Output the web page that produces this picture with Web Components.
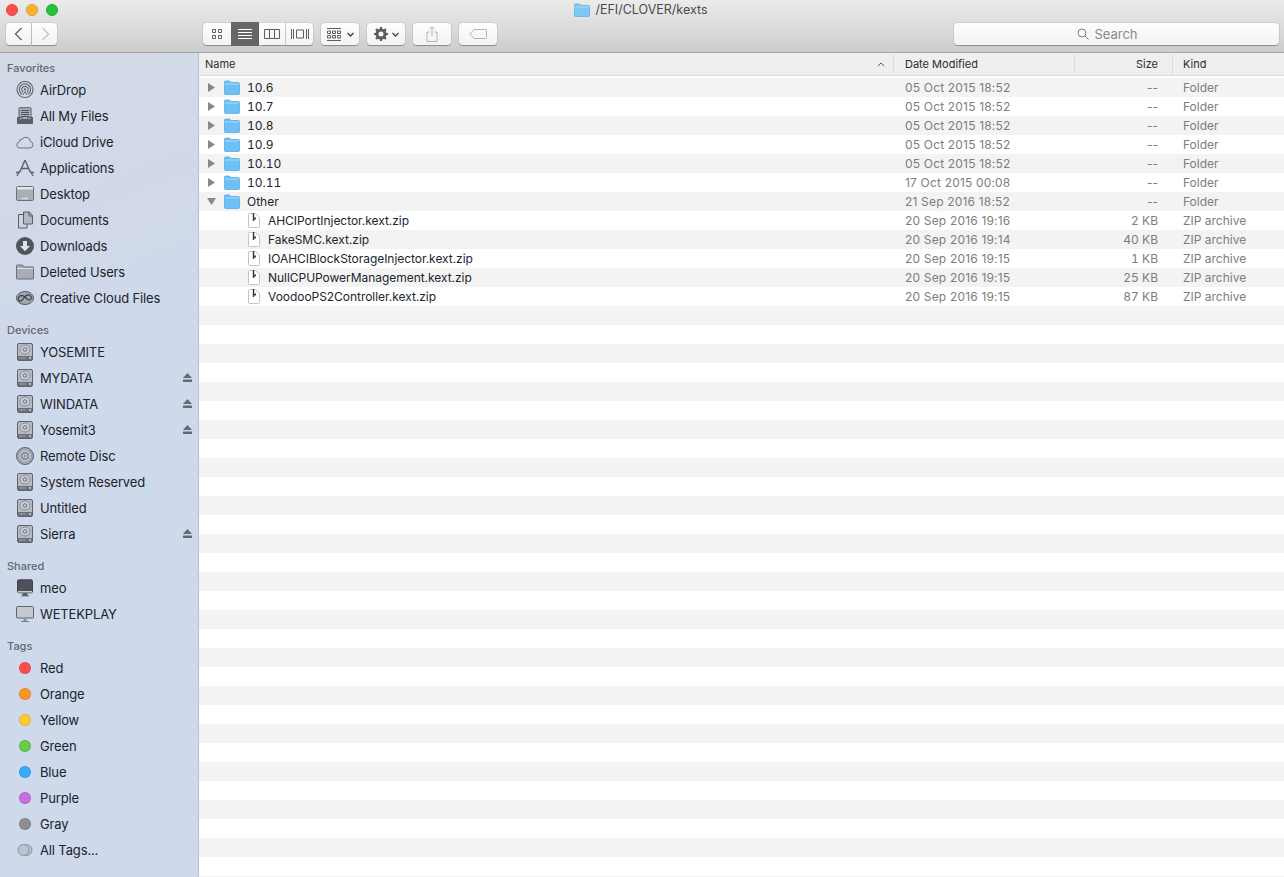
<!DOCTYPE html>
<html><head><meta charset="utf-8"><style>
html,body{margin:0;height:100%;overflow:hidden}
body{font-family:"Inter","Liberation Sans",sans-serif;width:1284px;height:877px}
</style></head><body>
<finder-window></finder-window>
<script>
const I={
airdrop:'<circle cx="9" cy="8.500" r="8" fill="none" stroke="#666a72" stroke-width="1.200"/><circle cx="9" cy="8.500" r="5.600" fill="none" stroke="#666a72" stroke-width="1.200"/><circle cx="9" cy="8.500" r="3.200" fill="none" stroke="#666a72" stroke-width="1.200"/><circle cx="9" cy="8.500" r="1.200" fill="#666a72"/><path d="M4.500 15l4.500-6 4.500 6z" fill="#cfd9ec"/><path d="M7 14l2-3.500 2 3.500" fill="none" stroke="#666a72"/>',
files:'<path d="M1 10.500h16v5.500a1 1 0 0 1-1 1H2a1 1 0 0 1-1-1z" fill="#5b5f66"/><rect x="3" y=".7" width="12" height="12" rx=".8" fill="#a9aeb8" stroke="#5b5f66"/><path d="M5 3.500h8M5 5.500h8M5 7.500h8M5 9.500h8" stroke="#4f535a"/><path d="M1 10.500h5l1 2h4l1-2h5" fill="none" stroke="#5b5f66"/>',
cloud:'<path d="M4.500 15h9.500a3.300 3.300 0 0 0 .5-6.500A4.700 4.700 0 0 0 6.200 6 3 3 0 0 0 3.300 9 3 3 0 0 0 4.500 15z" fill="none" stroke="#6c7078"/>',
apps:'<path d="M9 1L3.800 13M9 1l5.200 12M5.300 9.500h7.400M0 13.500h3.500M14.500 13.500H18" fill="none" stroke="#5b5f66" stroke-width="1.400"/><path d="M1 17l2.500-5M17 17l-2.500-5" stroke="#5b5f66" stroke-width="1.200"/>',
desktop:'<rect x=".5" y="1.500" width="17" height="14" rx="1.500" fill="#a9aeb8" stroke="#6b6f77"/><path d="M1 2h16v2.500H1z" fill="#e2e6ee"/><path d="M6 13.500h6" stroke="#fff" stroke-dasharray="1 .7" stroke-width="1.400"/>',
docs:'<path d="M8 3.500H2.500v13.500H11v-4" fill="#cdd3df" stroke="#5b5f66"/><path d="M7.500 1h6l3 3.500V13h-9z" fill="#b3b8c3" stroke="#5b5f66"/><path d="M13 1v4h3.500" fill="none" stroke="#5b5f66"/>',
down:'<circle cx="9" cy="9" r="9" fill="#50545b"/><path d="M7 4h4v5h3l-5 5.200L4 9h3z" fill="#dfe4ee"/>',
folder:'<path d="M.5 3a1 1 0 0 1 1-1h5l1.500 2h9a.5.5 0 0 1 .5.500V15.500a.5.5 0 0 1-.5.500H1a.5.5 0 0 1-.5-.5z" fill="#a7acb8" stroke="#6b6f77"/><path d="M1 5.500h16" stroke="#dfe3ec"/>',
cc:'<ellipse cx="9" cy="9" rx="8.500" ry="6.500" fill="#a2a6b0" stroke="#55595f"/><path d="M2.500 11c-1-3 2-5.500 5-4 3 2 4 5 7 3.500 2-1.500.5-5-3-4.500-3 .5-3.500 4-6.500 6-1 .3-2 0-2.500-1" fill="none" stroke="#3f4349" stroke-width="1.300"/>',
hd:'<rect x="1.500" y=".5" width="15" height="17" rx="1.500" fill="#b5bac4" stroke="#5f636a"/><rect x="2" y="13" width="14" height="4" fill="#6c7077"/><path d="M3.500 15h6" stroke="#c5c9d1" stroke-dasharray="1 .6"/><circle cx="14" cy="15" r=".9" fill="#dfe2e8"/><ellipse cx="9" cy="6.500" rx="5" ry="4.500" fill="#cbcfd8" stroke="#878b94"/><ellipse cx="9" cy="6.500" rx="2" ry="1.700" fill="none" stroke="#666a72"/>',
disc:'<circle cx="9" cy="9" r="8.500" fill="#a3a7b0" stroke="#5f636a"/><circle cx="9" cy="9" r="5" fill="none" stroke="#c6cad2"/><circle cx="9" cy="9" r="3" fill="#cfd3db" stroke="#6f737a"/><circle cx="9" cy="9" r="1.200" fill="#8a8e97"/>',
imac:'<rect x="1.500" y=".8" width="15" height="13" rx="1.500" fill="#4e5157" stroke="#3f4248"/><rect x="2" y="12" width="14" height="1.500" fill="#c9cdd5"/><path d="M7 14.500h4l.5 2h-5zM5 17h8" fill="#55595f" stroke="#55595f" stroke-width=".7"/>',
mon:'<rect x=".5" y="1.500" width="17" height="11.500" rx="1" fill="#c3c8d2" stroke="#5f636a"/><path d="M7.500 13.500h3V16h-3z" fill="#8c9098"/><path d="M5 16.500h8" stroke="#777b83"/>',
};
const tpl=(s)=>{const t=document.createElement('template');t.innerHTML=s;return t};
const mk=(name,html,cls)=>{const t=tpl(html);customElements.define(name,class extends HTMLElement{
 constructor(){super();this.attachShadow({mode:'open'}).appendChild(t.content.cloneNode(true))}
 connectedCallback(){if(cls&&!this._d){this._d=1;cls.call(this)}}
})};
const chev='<svg width="7" height="5" viewBox="0 0 7 5"><path d="M.5 1l3 3 3-3" fill="none" stroke="#444" stroke-width="1.300"/></svg>';

mk('traffic-lights',`<style>:host{display:flex;gap:8px}i{width:12px;height:12px;border-radius:50%;display:block;box-sizing:border-box}</style>
<i style="background:#fc4f4e;border:.5px solid #e2433f"></i><i style="background:#fdb22e;border:.5px solid #e09d25"></i><i style="background:#25c33a;border:.5px solid #1fa92f"></i>`);

mk('tool-btn',`<style>:host{display:flex;align-items:center;justify-content:center;flex:none;height:22px;box-sizing:border-box;background:linear-gradient(#fdfdfd,#f3f3f3);border-radius:4px;box-shadow:0 .5px 1px rgba(0,0,0,.32),0 0 0 .5px rgba(0,0,0,.07)}</style><slot></slot>`);

mk('title-bar',`<style>:host{display:block;box-sizing:border-box;height:53px;background:linear-gradient(#ebebeb,#cdcdcd);border-bottom:1px solid #a6a6a6}
.top{display:grid;grid-template-columns:1fr auto 1fr;height:19px;align-items:center;padding:0 6px}
.title{display:flex;align-items:center;gap:5px;font:12.5px "Inter",sans-serif;color:#4a4a4a;margin-left:-2px}
.bar{display:flex;align-items:flex-start;height:22px;margin-top:4px;padding-left:6px}
svg{display:block}
.nav{width:25px}
.v{width:28px}
.m{width:38px;margin-left:8px}
.search{margin-left:457px;width:325px;font-size:13px;color:#8a8a8a;gap:5px;padding-right:18px}
.sel{height:24px;margin-top:-1px;background:#666;border-radius:0;box-shadow:none}
</style>
<div class="top"><traffic-lights></traffic-lights><div class="title"><svg width="16" height="14" viewBox="0 0 16 14"><path d="M.5 2a1 1 0 0 1 1-1h4l1.500 1.500h7.500a1 1 0 0 1 1 1V12.500a1 1 0 0 1-1 1h-13a1 1 0 0 1-1-1z" fill="#7ec8f6" stroke="#5aa9de" stroke-width=".7"/><path d="M.8 4h14.400" stroke="#a8dcfa"/></svg><span>/EFI/CLOVER/kexts</span></div><div></div></div>
<div class="bar">
 <tool-btn class="nav" style="border-radius:4px 0 0 4px;margin-right:1px"><svg width="10" height="14" viewBox="0 0 10 14"><path d="M7.500 1L1.500 7l6 6" fill="none" stroke="#666" stroke-width="1.400"/></svg></tool-btn>
 <tool-btn class="nav" style="border-radius:0 4px 4px 0;margin-right:146px"><svg width="10" height="14" viewBox="0 0 10 14"><path d="M2.500 1l6 6-6 6" fill="none" stroke="#c4c4c4" stroke-width="1.400"/></svg></tool-btn>
 <tool-btn class="v" style="border-radius:4px 0 0 4px"><svg width="10" height="10" viewBox="0 0 10 10"><path d="M.5.500h3v3h-3zM6.500.500h3v3h-3zM.5 6.500h3v3h-3zM6.500 6.500h3v3h-3z" fill="none" stroke="#5e5e5e"/></svg></tool-btn>
 <tool-btn class="v sel"><svg width="14" height="10" viewBox="0 0 14 10"><path d="M0 .5h14M0 3.500h14M0 6.500h14M0 9.500h14" stroke="#fff"/></svg></tool-btn>
 <tool-btn style="width:27px;border-radius:0;border-right:1px solid #d8d8d8"><svg width="16" height="10" viewBox="0 0 16 10"><path d="M.5.500h15v9H.500zM5.500.500v9M10.500.500v9" fill="none" stroke="#5e5e5e"/></svg></tool-btn>
 <tool-btn style="width:27px;border-radius:0 4px 4px 0"><svg width="18" height="12" viewBox="0 0 18 12"><path d="M5.500 2h7v8h-7zM.5 1v10M2.500 1v10M15.500 1v10M17.500 1v10" fill="none" stroke="#5e5e5e"/></svg></tool-btn>
 <tool-btn class="m" style="gap:6px"><svg width="14" height="13" viewBox="0 0 14 13"><path d="M0 .5h14M0 12.500h14M.5 3h3v2.500h-3zM5.500 3h3v2.500h-3zM10.500 3h3v2.500h-3zM.5 7.500h3V10h-3zM5.500 7.500h3V10h-3zM10.500 7.500h3V10h-3z" fill="none" stroke="#5e5e5e"/></svg>${chev}</tool-btn>
 <tool-btn class="m" style="gap:4px"><svg width="14" height="14" viewBox="0 0 14 14"><circle cx="7" cy="7" r="4" fill="none" stroke="#5c5c5c" stroke-width="3"/><path d="M7 0v3M7 11v3M0 7h3M11 7h3M2 2l2 2M10 10l2 2M12 2l-2 2M4 10l-2 2" stroke="#5c5c5c" stroke-width="2.200"/></svg>${chev}</tool-btn>
 <tool-btn class="m"><svg width="12" height="16" viewBox="0 0 12 16"><path d="M3.500 6H1v9.500h10V6H8.500M6 10.500V1M3.500 3.200L6 .8l2.500 2.400" fill="none" stroke="#b2b2b2"/></svg></tool-btn>
 <tool-btn class="m"><svg width="18" height="10" viewBox="0 0 18 10"><path d="M5 .5h11.500a1 1 0 0 1 1 1v7a1 1 0 0 1-1 1H5L.8 5z" fill="none" stroke="#b2b2b2"/></svg></tool-btn>
 <tool-btn class="search"><svg width="12" height="12" viewBox="0 0 12 12"><circle cx="5" cy="5" r="4" fill="none" stroke="#808080"/><path d="M8 8l3.500 3.500" stroke="#808080"/></svg><span>Search</span></tool-btn>
</div>`);

mk('side-item',`<style>:host{display:flex;align-items:center;height:26px;padding-left:16px;font-size:13px;color:#20232b;position:relative;letter-spacing:-.14px}
.ic{width:18px;height:18px;margin-right:6px;flex:none;display:flex;align-items:center;justify-content:center}
.dot{width:12px;height:12px;border-radius:50%;box-sizing:border-box;border:.5px solid rgba(0,0,0,.1)}
svg{display:block}
.ej{position:absolute;right:6px;top:8px}
</style><span class="ic"></span><slot></slot>`,function(){
 const ic=this.shadowRoot.querySelector('.ic');
 const n=this.getAttribute('icon'),c=this.getAttribute('color');
 if(n==='alltags')ic.innerHTML='<svg width="16" height="14" viewBox="0 0 16 14"><circle cx="9.500" cy="7" r="5.500" fill="#bcc3d2" stroke="#8e939e"/><circle cx="6.500" cy="7" r="5.500" fill="#bcc3d2" stroke="#8e939e"/></svg>';
 else if(c)ic.innerHTML=`<span class="dot" style="background:${c}"></span>`;
 else ic.innerHTML=`<svg width="18" height="18" viewBox="0 0 18 18">${I[n]}</svg>`;
 if(this.hasAttribute('eject'))this.shadowRoot.appendChild(tpl('<svg class="ej" width="9" height="9" viewBox="0 0 9 9"><path d="M4.500 0L9 5H0zM0 6.500h9V9H0z" fill="#666a72"/></svg>').content);
});
mk('side-group',`<style>:host{display:block;margin-bottom:12px}
h4{margin:0;font:500 11px/14px "Inter","Liberation Sans",sans-serif;color:#63676f;padding-left:7px;height:16px}
</style><h4></h4><slot></slot>`,function(){this.shadowRoot.querySelector('h4').textContent=this.getAttribute('label')});

mk('side-bar',`<style>:host{display:block;box-sizing:border-box;width:199px;flex:none;border-right:1px solid #b3bfd6;padding-top:8px;overflow:hidden;background:linear-gradient(160deg,#d3d9e6,#cfd9ec 40%)}</style>
<side-group label="Favorites">
<side-item icon="airdrop">AirDrop</side-item><side-item icon="files">All My Files</side-item><side-item icon="cloud">iCloud Drive</side-item><side-item icon="apps">Applications</side-item><side-item icon="desktop">Desktop</side-item><side-item icon="docs">Documents</side-item><side-item icon="down">Downloads</side-item><side-item icon="folder">Deleted Users</side-item><side-item icon="cc">Creative Cloud Files</side-item>
</side-group>
<side-group label="Devices">
<side-item icon="hd">YOSEMITE</side-item><side-item icon="hd" eject>MYDATA</side-item><side-item icon="hd" eject>WINDATA</side-item><side-item icon="hd" eject>Yosemit3</side-item><side-item icon="disc">Remote Disc</side-item><side-item icon="hd">System Reserved</side-item><side-item icon="hd">Untitled</side-item><side-item icon="hd" eject>Sierra</side-item>
</side-group>
<side-group label="Shared"><side-item icon="imac">meo</side-item><side-item icon="mon">WETEKPLAY</side-item></side-group>
<side-group label="Tags">
<side-item color="#fc4c4e">Red</side-item><side-item color="#fd9426">Orange</side-item><side-item color="#fecb2f">Yellow</side-item><side-item color="#65cd47">Green</side-item><side-item color="#36abfb">Blue</side-item><side-item color="#c96fdd">Purple</side-item><side-item color="#8e8e92">Gray</side-item><side-item icon="alltags">All Tags...</side-item>
</side-group>`);

mk('list-head',`<style>:host{display:grid;grid-template-columns:695px 181px 98px 1fr;height:23px;box-sizing:border-box;background:#efefef;border-bottom:1px solid #dcdcdc;font-size:11px;color:#2c2c2c;align-items:center}
span{height:19px;display:flex;align-items:center;padding-left:6px;border-right:1px solid #dcdcdc;box-sizing:border-box}
.n{justify-content:space-between;padding-right:8px}
.r{justify-content:flex-end;padding-right:14px;padding-left:0}
.k{border:0;padding-left:10px}
.d{padding-left:11px}
</style><span class="n">Name<svg width="8" height="5" viewBox="0 0 8 5"><path d="M.8 4L4 1l3.200 3" fill="none" stroke="#555"/></svg></span><span class="d">Date Modified</span><span class="r">Size</span><span class="k">Kind</span>`);

mk('file-row',`<style>:host{display:grid;grid-template-columns:695px 181px 98px 1fr;height:19px;align-items:center;font-size:12px;color:#7d7d7d}
:host(:nth-child(odd)){background:#f3f3f3}
.name{display:flex;align-items:center;color:#22252c;white-space:nowrap}
.tw{width:9px;margin-left:8px;margin-right:8px;display:flex;justify-content:center}
.d{padding-left:11px;letter-spacing:.18px}.s{text-align:right;padding-right:15px}.k{padding-left:10px}
.num{font-variant-numeric:tabular-nums}
.zn{letter-spacing:-.04px}
svg{display:block;flex:none}
</style><div class="name"></div><div class="d"></div><div class="s"></div><div class="k"></div>`,function(){
 const r=this.shadowRoot,a=k=>this.getAttribute(k)||'';
 const n=r.querySelector('.name');
 if(!a('n'))return;
 if(a('type')==='zip'){
  n.style.paddingLeft='49px';
  n.innerHTML=`<svg width="12" height="15" viewBox="0 0 12 15" style="margin-right:8px"><path d="M1.500.500h6l4 4v9a1 1 0 0 1-1 1h-9a1 1 0 0 1-1-1v-12a1 1 0 0 1 1-1z" fill="#fff" stroke="#c4c4c4"/><path d="M5.500 0v8" stroke="#333" stroke-width="1.400"/><path d="M5.500 4.500h2.500v2H5.500z" fill="#444"/></svg><span class="zn">${a('n')}</span>`;
  r.querySelector('.s').classList.add('num');
 } else {
  const tw=a('open')?'<svg width="9" height="7" viewBox="0 0 9 7"><path d="M0 0h9L4.500 7z" fill="#888"/></svg>':'<svg width="7" height="9" viewBox="0 0 7 9"><path d="M0 0l7 4.500L0 9z" fill="#888"/></svg>';
  n.innerHTML=`<span class="tw">${tw}</span><svg width="16" height="15" viewBox="0 0 16 15" style="margin-right:7px"><path d="M.5 2a1 1 0 0 1 1-1h4l1.500 1.500h7.500a1 1 0 0 1 1 1V13.500a1 1 0 0 1-1 1h-13a1 1 0 0 1-1-1z" fill="#6cc0f5" stroke="#4fa6de" stroke-width=".7"/><path d="M.8 4h14.400" stroke="#a5dcfb"/></svg><span class="num">${a('n')}</span>`;
 }
 r.querySelector('.d').textContent=a('d');r.querySelector('.s').textContent=a('s');r.querySelector('.k').textContent=a('k');
});

mk('file-list',`<style>:host{display:block;flex:1;background:#fff;overflow:hidden;min-width:0}.rows{margin-top:2px;display:block}</style><list-head></list-head><div class="rows"></div>`,function(){
 const rows=[['10.6','05 Oct 2015 18:52','--','Folder'],['10.7','05 Oct 2015 18:52','--','Folder'],['10.8','05 Oct 2015 18:52','--','Folder'],['10.9','05 Oct 2015 18:52','--','Folder'],['10.10','05 Oct 2015 18:52','--','Folder'],['10.11','17 Oct 2015 00:08','--','Folder'],['Other','21 Sep 2016 18:52','--','Folder',1],
 ['AHCIPortInjector.kext.zip','20 Sep 2016 19:16','2 KB','ZIP archive'],['FakeSMC.kext.zip','20 Sep 2016 19:14','40 KB','ZIP archive'],['IOAHCIBlockStorageInjector.kext.zip','20 Sep 2016 19:15','1 KB','ZIP archive'],['NullCPUPowerManagement.kext.zip','20 Sep 2016 19:15','25 KB','ZIP archive'],['VoodooPS2Controller.kext.zip','20 Sep 2016 19:15','87 KB','ZIP archive']];
 const box=this.shadowRoot.querySelector('.rows');
 for(let i=0;i<43;i++){const e=document.createElement('file-row');const x=rows[i];
  if(x){e.setAttribute('n',x[0]);e.setAttribute('d',x[1]);e.setAttribute('s',x[2]);e.setAttribute('k',x[3]);if(x[4])e.setAttribute('open','1');e.setAttribute('type',i>6?'zip':'folder')}
  box.appendChild(e)}
});

mk('finder-window',`<style>:host{display:flex;flex-direction:column;width:1284px;height:877px;overflow:hidden}.main{display:flex;flex:1;min-height:0}</style><title-bar></title-bar><div class="main"><side-bar></side-bar><file-list></file-list></div>`);
</script>
</body></html>
